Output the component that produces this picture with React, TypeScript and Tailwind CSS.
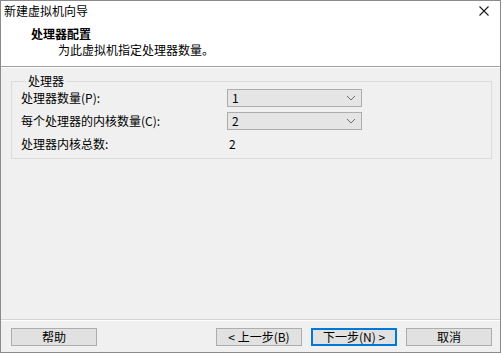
import React from "react";

const font = {
  fontFamily: '"Noto Sans CJK SC", "Noto Sans", "Liberation Sans", sans-serif',
};

function Chevron() {
  return (
    <svg width="10" height="6" viewBox="0 0 10 6" className="shrink-0">
      <path d="M1 1 L5 5 L9 1" fill="none" stroke="#6d6d6d" strokeWidth="1" />
    </svg>
  );
}

function Combo({ value }: { value: string }) {
  return (
    <div className="w-[135px] h-[18px] bg-[#e5e5e5] border border-[#adadad] flex items-center justify-between pl-[4px] pr-[5px]">
      <span className="text-[12px] leading-[16px] text-black">{value}</span>
      <Chevron />
    </div>
  );
}

function Btn({ label, primary }: { label: string; primary?: boolean }) {
  return (
    <div
      className={
        "w-[86px] h-[18px] bg-[#e1e1e1] flex items-center justify-center text-[12px] leading-[16px] text-black " +
        (primary ? "border-2 border-[#0078d7]" : "border border-[#adadad]")
      }
    >
      {label}
    </div>
  );
}

export default function App() {
  return (
    <div
      style={font}
      className="w-[503px] h-[354px] bg-white"
    >
      <div className="w-[501px] h-[353px] border border-[#8a8a8a] bg-[#f0f0f0] flex flex-col">
        {/* header */}
        <div className="h-[65px] bg-white flex flex-col">
          <div className="h-[20px] flex items-center justify-between pl-[3px] pr-[11px]">
            <span className="text-[12px] leading-[16px] text-black">新建虚拟机向导</span>
            <svg width="10" height="10" viewBox="0 0 10 10">
              <path d="M0.5 0.5 L9.5 9.5 M9.5 0.5 L0.5 9.5" stroke="#1a1a1a" strokeWidth="1.1" />
            </svg>
          </div>
          <div className="mt-[5px] pl-[30px] text-[12px] leading-[16px] font-bold text-black">
            处理器配置
          </div>
          <div className="pl-[57px] text-[12px] leading-[16px] text-black">
            为此虚拟机指定处理器数量。
          </div>
        </div>
        <div className="h-[1px] bg-[#a0a0a0]" />
        <div className="h-[1px] bg-white" />

        {/* body */}
        <div className="flex-1 px-[10px] pt-[5px]">
          <fieldset className="w-[481px] border border-[#dcdcdc] pl-[9px] pb-[5px]">
            <legend className="ml-[5px] px-[2px] text-[12px] leading-[16px] text-black">处理器</legend>
            <div className="flex flex-col gap-[5px]">
              <div className="h-[18px] flex items-center">
                <span className="w-[206px] text-[12px] leading-[16px] text-black">处理器数量(P):</span>
                <Combo value="1" />
              </div>
              <div className="h-[18px] flex items-center">
                <span className="w-[206px] text-[12px] leading-[16px] text-black">每个处理器的内核数量(C):</span>
                <Combo value="2" />
              </div>
              <div className="h-[18px] flex items-center">
                <span className="w-[208px] text-[12px] leading-[16px] text-black">处理器内核总数:</span>
                <span className="text-[12px] leading-[16px] text-black">2</span>
              </div>
            </div>
          </fieldset>
        </div>

        {/* footer */}
        <div className="h-[1px] bg-[#d4d4d4]" />
        <div className="h-[1px] bg-white" />
        <div className="h-[31px] pt-[7px] pl-[10px] pr-[8px] flex items-start">
          <Btn label="帮助" />
          <div className="flex-1" />
          <div className="flex gap-[9px]">
            <Btn label="< 上一步(B)" />
            <Btn label="下一步(N) >" primary />
            <Btn label="取消" />
          </div>
        </div>
      </div>
    </div>
  );
}
